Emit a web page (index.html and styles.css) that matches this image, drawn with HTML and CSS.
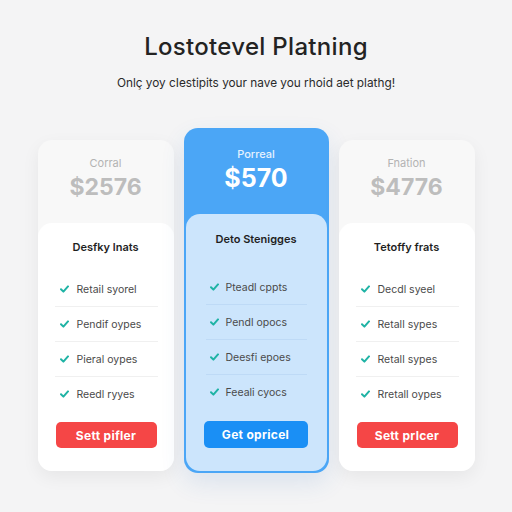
FILE: index.html
```html
<!DOCTYPE html>
<html>
<head>
<meta charset="utf-8">
<link rel="stylesheet" href="styles.css">
</head>
<body>
<div class="page">
  <h1 class="title">Lostotevel Platning</h1>
  <p class="subtitle">Onlç yoy cIestipits your nave you rhoid aet plathg!</p>
  <div class="plans">
    <div class="card side">
      <div class="card-top">
        <div class="label">Corral</div>
        <div class="price">$2576</div>
      </div>
      <div class="card-body">
        <div class="heading">Desfky lnats</div>
        <ul class="features">
          <li><svg class="check" viewBox="0 0 9 8"><path d="M1 4.2 L3.4 6.6 L8 1.4"/></svg>Retail syorel</li>
          <li><svg class="check" viewBox="0 0 9 8"><path d="M1 4.2 L3.4 6.6 L8 1.4"/></svg>Pendif oypes</li>
          <li><svg class="check" viewBox="0 0 9 8"><path d="M1 4.2 L3.4 6.6 L8 1.4"/></svg>Pieral oypes</li>
          <li><svg class="check" viewBox="0 0 9 8"><path d="M1 4.2 L3.4 6.6 L8 1.4"/></svg>Reedl ryyes</li>
        </ul>
        <button class="btn red">Sett pifler</button>
      </div>
    </div>
    <div class="card featured">
      <div class="card-top">
        <div class="label">Porreal</div>
        <div class="price">$570</div>
      </div>
      <div class="card-body">
        <div class="heading">Deto Stenigges</div>
        <ul class="features">
          <li><svg class="check" viewBox="0 0 9 8"><path d="M1 4.2 L3.4 6.6 L8 1.4"/></svg>Pteadl cppts</li>
          <li><svg class="check" viewBox="0 0 9 8"><path d="M1 4.2 L3.4 6.6 L8 1.4"/></svg>Pendl opocs</li>
          <li><svg class="check" viewBox="0 0 9 8"><path d="M1 4.2 L3.4 6.6 L8 1.4"/></svg>Deesfi epoes</li>
          <li><svg class="check" viewBox="0 0 9 8"><path d="M1 4.2 L3.4 6.6 L8 1.4"/></svg>Feeali cyocs</li>
        </ul>
        <button class="btn blue">Get opricel</button>
      </div>
    </div>
    <div class="card side">
      <div class="card-top">
        <div class="label">Fnation</div>
        <div class="price">$4776</div>
      </div>
      <div class="card-body">
        <div class="heading">Tetoffy frats</div>
        <ul class="features">
          <li><svg class="check" viewBox="0 0 9 8"><path d="M1 4.2 L3.4 6.6 L8 1.4"/></svg>Decdl syeel</li>
          <li><svg class="check" viewBox="0 0 9 8"><path d="M1 4.2 L3.4 6.6 L8 1.4"/></svg>Retall sypes</li>
          <li><svg class="check" viewBox="0 0 9 8"><path d="M1 4.2 L3.4 6.6 L8 1.4"/></svg>Retall sypes</li>
          <li><svg class="check" viewBox="0 0 9 8"><path d="M1 4.2 L3.4 6.6 L8 1.4"/></svg>Rretall oypes</li>
        </ul>
        <button class="btn red">Sett prlcer</button>
      </div>
    </div>
  </div>
</div>
</body>
</html>
```

FILE: styles.css
```css
* { box-sizing: border-box; }
html, body {
  margin: 0;
  padding: 0;
  background: #f4f4f5;
  font-family: Inter, "Noto Sans", sans-serif;
}
.page {
  width: 512px;
  height: 512px;
  padding-top: 32px;
}
.title {
  margin: 0;
  text-align: center;
  font-size: 24px;
  line-height: 30px;
  font-weight: 500;
  color: #232323;
  letter-spacing: 0.3px;
}
.subtitle {
  margin: 13px 0 0;
  text-align: center;
  font-size: 11.8px;
  line-height: 16px;
  color: #2a2a2a;
}
.plans {
  margin-top: 37px;
  display: flex;
  justify-content: center;
  align-items: flex-start;
  gap: 10px;
}
.card {
  display: flex;
  flex-direction: column;
  border-radius: 14px;
}
.side {
  width: 136px;
  height: 331px;
  margin-top: 12px;
  background: #f8f8f8;
  box-shadow: 0 6px 18px rgba(0, 0, 0, 0.06);
}
.featured {
  width: 145px;
  height: 345px;
  background: #4ba6f6;
  padding: 0 2px 2px;
  box-shadow: 0 10px 24px rgba(40, 110, 190, 0.12);
}
.card-top {
  text-align: center;
}
.side .card-top { height: 83px; padding-top: 16px; }
.featured .card-top { height: 86px; padding-top: 19px; }
.label {
  font-size: 11px;
  line-height: 14px;
}
.price {
  margin-top: 3px;
  font-size: 23px;
  line-height: 28px;
  font-weight: 700;
}
.side .label { color: #b3b3b3; }
.side .price { color: #bdbdbd; }
.featured .label { color: #e6f2ff; font-weight: 500; }
.featured .price { color: #ffffff; font-size: 25px; }
.card-body {
  flex: 1;
  border-radius: 14px;
  display: flex;
  flex-direction: column;
}
.side .card-body {
  background: #ffffff;
  padding-top: 17px;
}
.featured .card-body {
  background: #cce5fc;
  padding-top: 18px;
}
.heading {
  text-align: center;
  font-size: 11px;
  line-height: 14px;
  font-weight: 600;
  color: #1f1f1f;
}
.features {
  list-style: none;
  margin: 0;
}
.side .features { margin-top: 18px; padding: 0 16px 0 17px; }
.featured .features { margin-top: 24px; padding: 0 20px; }
.features li {
  height: 35px;
  display: flex;
  align-items: center;
  gap: 8px;
  font-size: 10.5px;
  color: #4a4a4a;
  border-bottom: 1px solid #f0f0f0;
}
.side .features li { padding-left: 5px; }
.featured .features li { padding-left: 4px; gap: 7px; border-bottom-color: rgba(70, 130, 200, 0.10); }
.features li:last-child { border-bottom: none; height: 34px; }
.check {
  width: 9px;
  height: 8px;
  flex: none;
}
.check path {
  fill: none;
  stroke: #1fb3a5;
  stroke-width: 2;
  stroke-linecap: round;
  stroke-linejoin: round;
}
.btn {
  border: none;
  border-radius: 5px;
  height: 26px;
  font-family: Inter, "Noto Sans", sans-serif;
  font-size: 12px;
  font-weight: 700;
  color: #ffffff;
  letter-spacing: 0.3px;
}
.side .btn { margin: 11px 17px 0 18px; }
.featured .btn { margin: 12px 19px 0 18px; height: 27px; }
.red { background: #f54646; }
.blue { background: #1a8ff5; }
```
